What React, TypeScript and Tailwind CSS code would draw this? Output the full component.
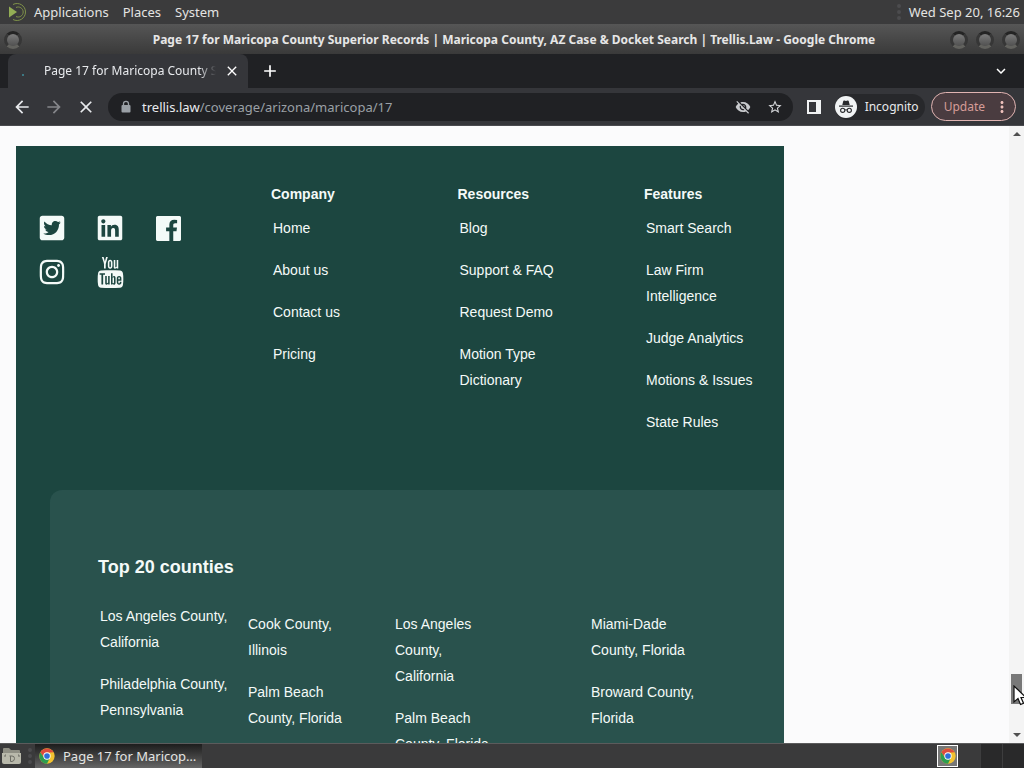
import React from 'react';
import { FaLinkedin, FaTwitterSquare, FaInstagram } from 'react-icons/fa';
import { TfiYoutube } from 'react-icons/tfi';
import {
  MdArrowBack,
  MdArrowForward,
  MdClose,
  MdAdd,
  MdVisibilityOff,
  MdStarBorder,
  MdMoreVert,
  MdExpandMore,
} from 'react-icons/md';

const companyLinks = ['Home', 'About us', 'Contact us', 'Pricing'];
const resourceLinks = ['Blog', 'Support & FAQ', 'Request Demo', 'Motion Type Dictionary'];
const featureLinks = [
  'Smart Search',
  'Law Firm Intelligence',
  'Judge Analytics',
  'Motions & Issues',
  'State Rules',
];

const ChromeLogo: React.FC<{ className?: string }> = ({ className }) => (
  <svg viewBox="0 0 48 48" className={className} aria-hidden="true">
    <circle cx="24" cy="24" r="23" fill="#f2c230" />
    <path d="M4 13A23 23 0 0 1 44 13L24 14A10 10 0 0 0 15.3 29Z" fill="#dd4b3e" />
    <path d="M4 13A23 23 0 0 0 24 47L32.7 29A10 10 0 0 1 15.3 29Z" fill="#2d9d50" />
    <circle cx="24" cy="24" r="11" fill="#fff" />
    <circle cx="24" cy="24" r="8.5" fill="#2f6fd8" />
  </svg>
);

const FacebookLogo: React.FC = () => (
  <svg viewBox="0 0 1536 1536" className="w-[25px] h-[25px]" fill="currentColor" aria-hidden="true">
    <path d="M1451 0q35 0 60 25t25 60v1366q0 35-25 60t-60 25h-391v-595h199l30-232h-229v-148q0-56 23.5-84t91.5-28l122-1v-207q-63-9-178-9-136 0-217.500 80t-81.500 226v171h-200v232h200v595h-735q-35 0-60-25t-25-60v-1366q0-35 25-60t60-25h1366z" />
  </svg>
);

const LockIcon: React.FC = () => (
  <svg viewBox="0 0 12 14" className="w-3 h-3.5" aria-hidden="true">
    <rect x="1.500" y="5" width="9" height="7.500" rx="1" fill="#9aa0a6" />
    <path d="M3.500 5.500V3.800A2.500 2.500 0 0 1 8.500 3.800V5.500" fill="none" stroke="#9aa0a6" strokeWidth="1.300" />
  </svg>
);

const IncognitoIcon: React.FC = () => (
  <svg viewBox="0 0 22 22" className="w-[22px] h-[22px]" aria-hidden="true">
    <circle cx="11" cy="11" r="11" fill="#f1f3f4" />
    <path d="M7.300 9 8.200 5.200Q8.500 4.300 9.400 4.600L11 5.100 12.600 4.600Q13.500 4.300 13.800 5.200L14.700 9Z" fill="#292a2d" />
    <rect x="4" y="9.500" width="14" height="1.200" fill="#292a2d" />
    <circle cx="7.700" cy="14.300" r="2.100" fill="none" stroke="#292a2d" strokeWidth="1.100" />
    <circle cx="14.300" cy="14.300" r="2.100" fill="none" stroke="#292a2d" strokeWidth="1.100" />
    <path d="M9.800 14.100Q11 13.300 12.200 14.100" fill="none" stroke="#292a2d" strokeWidth="1.100" />
  </svg>
);

const WindowButton: React.FC<{ label: string }> = ({ label }) => (
  <button
    aria-label={label}
    className="w-[18px] h-[18px] rounded-full border-[3px] border-t-[#242424] border-x-[#363636] border-b-[#62625e] bg-linear-to-b from-[#7c7c7c] to-[#505050]"
  />
);

const DesktopPanel: React.FC = () => (
  <div className="h-6 shrink-0 bg-[#3b3b3c] flex items-center justify-between pl-2 pr-1 text-[#e4e4e2]">
    <nav className="flex items-center">
      <svg viewBox="0 0 20 20" className="w-5 h-5 mr-1.5" aria-hidden="true">
        <path d="M1 4.500 9 10 1 15.500Z" fill="#93ad55" />
        <path d="M5 2.500A8.500 8.500 0 1 1 5 17.500" fill="none" stroke="#7f9249" strokeWidth="1" />
        <path d="M8 5.500A5 5 0 1 1 8 14.500" fill="none" stroke="#7f9249" strokeWidth="1" />
      </svg>
      <div className="flex gap-3.5">
        <button>Applications</button>
        <button>Places</button>
        <button>System</button>
      </div>
    </nav>
    <div className="flex items-center gap-2">
      <span className="w-1 h-4 border-l-4 border-dotted border-[#4c4c4e]" />
      <time>Wed Sep 20, 16:26</time>
    </div>
  </div>
);

const TitleBar: React.FC = () => (
  <header className="h-[30px] shrink-0 flex items-center bg-linear-to-b from-[#565656] to-[#3a3a3a] pl-1 pr-1 pt-0.5">
    <WindowButton label="Window menu" />
    <h1 className="flex-1 text-center text-xs leading-5 font-bold text-[#e6e6e6] truncate pl-14">
      Page 17 for Maricopa County Superior Records | Maricopa County, AZ Case &amp; Docket Search | Trellis.Law - Google Chrome
    </h1>
    <div className="flex gap-2">
      <WindowButton label="Minimize" />
      <WindowButton label="Maximize" />
      <WindowButton label="Close" />
    </div>
  </header>
);

const TabStrip: React.FC = () => (
  <div className="h-[34px] shrink-0 bg-[#202124] flex items-center pl-2 pr-3.5 text-white">
    <div className="w-60 h-full bg-[#35363a] rounded-t-lg flex items-center pl-3.5 pr-2">
      <span className="w-0.5 h-0.5 mt-2 mr-5 rounded-full bg-[#3f8f9c]" />
      <span className="flex-1 overflow-hidden whitespace-nowrap text-xs leading-5 text-[#e8eaed] mask-r-from-90%">
        Page 17 for Maricopa County S
      </span>
      <button aria-label="Close tab" className="ml-2">
        <MdClose className="w-4 h-4" />
      </button>
    </div>
    <button aria-label="New tab" className="ml-3">
      <MdAdd className="w-5 h-5" />
    </button>
    <button aria-label="Search tabs" className="ml-auto">
      <MdExpandMore className="w-[18px] h-[18px]" />
    </button>
  </div>
);

const Toolbar: React.FC = () => (
  <div className="h-[38px] shrink-0 bg-[#35363a] flex items-center pl-3 pr-2 border-b border-[#4a4b4f] text-xs leading-5 text-[#e8eaed]">
    <div className="flex gap-3">
      <button aria-label="Back"><MdArrowBack className="w-5 h-5" /></button>
      <button aria-label="Forward"><MdArrowForward className="w-5 h-5 text-[#85868a]" /></button>
      <button aria-label="Stop"><MdClose className="w-5 h-5" /></button>
    </div>
    <div className="flex-1 h-7 ml-3 rounded-full bg-[#202124] flex items-center pl-3 pr-2.5 text-[#9aa0a6]">
      <LockIcon />
      <a href="#address" className="flex-1 ml-2.5 text-[13px]">
        <span className="text-[#e8eaed]">trellis.law</span>/coverage/arizona/maricopa/17
      </a>
      <button aria-label="Third-party cookies blocked" className="mr-4">
        <MdVisibilityOff className="w-4 h-4 text-[#c8cacd]" />
      </button>
      <button aria-label="Bookmark this tab"><MdStarBorder className="w-4 h-4 text-[#d5d7da]" /></button>
    </div>
    <button aria-label="Side panel" className="ml-3.5 w-3.5 h-3.5 border-2 border-r-[5px] border-[#f1f3f4]" />
    <button className="ml-3.5 h-[26px] pr-1.5 rounded-full bg-[#27282b] flex items-center gap-2">
      <IncognitoIcon />
      Incognito
    </button>
    <button className="ml-1.5 h-[29px] pl-3 pr-1 rounded-full border border-[#e0b4b2] bg-[#4a3c40] text-[#d69c98] flex items-center gap-2">
      Update
      <MdMoreVert className="w-[18px] h-[18px] text-[#eec0bb]" />
    </button>
  </div>
);

const LinkList: React.FC<{ links: string[]; className?: string }> = ({ links, className }) => (
  <ul className={`space-y-4 ${className ?? ''}`}>
    {links.map((link) => (
      <li key={link}>
        <a href="#link">{link}</a>
      </li>
    ))}
  </ul>
);

const LinkColumn: React.FC<{ title: string; links: string[] }> = ({ title, links }) => (
  <div>
    <h2 className="font-bold">{title}</h2>
    <LinkList links={links} className="mt-2 ml-0.5 w-28" />
  </div>
);

const Footer: React.FC = () => (
  <footer className="w-[75vw] h-full bg-[#1c4640] text-[#f4faf8] text-sm leading-[26px]">
    <div className="grid grid-cols-[255px_1fr_1fr_140px] pt-[35px] pb-[55px]">
      <div className="grid grid-cols-[58px_58px_58px] auto-rows-[44px] place-items-center content-start pl-[7px] pt-[25px]">
        <a href="#twitter" aria-label="Twitter"><FaTwitterSquare className="block w-7 h-7" /></a>
        <a href="#linkedin" aria-label="LinkedIn"><FaLinkedin className="block w-7 h-7" /></a>
        <a href="#facebook" aria-label="Facebook"><FacebookLogo /></a>
        <a href="#instagram" aria-label="Instagram"><FaInstagram className="block w-7 h-7" /></a>
        <a href="#youtube" aria-label="YouTube"><TfiYoutube className="block w-[31px] h-[31px]" /></a>
      </div>
      <LinkColumn title="Company" links={companyLinks} />
      <LinkColumn title="Resources" links={resourceLinks} />
      <LinkColumn title="Features" links={featureLinks} />
    </div>
    <section className="ml-[34px] pl-12 pt-16 h-full rounded-tl-xl bg-[#29524d]">
      <h2 className="text-lg leading-[26px] font-bold">Top 20 counties</h2>
      <div className="grid grid-cols-[148px_147px_196px_1fr] pl-0.5 mt-[23px]">
        <LinkList links={['Los Angeles County, California', 'Philadelphia County, Pennsylvania']} className="w-32" />
        <LinkList links={['Cook County, Illinois', 'Palm Beach County, Florida']} className="mt-2 w-24" />
        <LinkList links={['Los Angeles County, California', 'Palm Beach County, Florida']} className="mt-2 w-24" />
        <LinkList links={['Miami-Dade County, Florida', 'Broward County, Florida']} className="mt-2 w-28" />
      </div>
    </section>
  </footer>
);

const ScrollBar: React.FC = () => (
  <div className="w-[15px] shrink-0 bg-[#f4f4f4] flex flex-col items-center pt-1.5 pb-1.5 text-[#505050]">
    <svg viewBox="0 0 8 4" className="w-2 h-1" fill="currentColor" aria-hidden="true"><path d="M0 4 4 0 8 4Z" /></svg>
    <div className="flex-1" />
    <div className="w-[11px] h-[30px] mb-[29px] bg-[#787878]" />
    <svg viewBox="0 0 8 4" className="w-2 h-1" fill="currentColor" aria-hidden="true"><path d="M0 0 4 4 8 0Z" /></svg>
  </div>
);

const Taskbar: React.FC = () => (
  <div className="h-[25px] shrink-0 border-t border-[#5b5b5c] bg-[#3a3a3b] flex items-center pl-0.5 text-[#e4e4e2]">
    <button aria-label="Files">
      <svg viewBox="0 0 20 18" className="w-5 h-[18px]" aria-hidden="true">
        <path d="M1 2Q1 1 2 1H7L9 3H17Q18 3 18 4V7H1Z" fill="#8f8f84" />
        <path d="M0 6H19V15Q19 17 17 17H2Q0 17 0 15Z" fill="#b9b9ab" />
        <path d="M7.500 9H10Q12.500 9 12.500 11.500T10 14.500H8.500V9M4 8H3V10M16 8H17V10" fill="none" stroke="#6d6d64" />
      </svg>
    </button>
    <span className="ml-1.5 w-1 h-4 border-l-4 border-dotted border-[#4c4c4e]" />
    <button className="ml-[3px] w-[167px] h-6 px-1 flex items-center gap-2 bg-linear-to-b from-[#1d1d1d] to-[#666] text-left">
      <ChromeLogo className="w-4 h-4 shrink-0" />
      <span className="truncate">Page 17 for Maricop…</span>
    </button>
    <div className="ml-auto h-full flex items-center">
      <div className="w-[21px] h-[22px] border border-white bg-[#777] flex items-center justify-center">
        <ChromeLogo className="w-4 h-4" />
      </div>
      <div className="ml-[22px] w-[22px] h-full border-l border-[#3d3d3e] bg-[#29292a]" />
      <div className="w-[22px] h-full border-l border-[#3d3d3e] bg-[#29292a]" />
    </div>
  </div>
);

const App: React.FC = () => {
  return (
    <div className="relative h-screen flex flex-col overflow-hidden text-[13px] leading-5 font-['Noto_Sans',sans-serif]">
      <DesktopPanel />
      <TitleBar />
      <TabStrip />
      <Toolbar />
      <div className="flex-1 min-h-0 flex bg-[#fbfbfc]">
        <main className="flex-1 overflow-hidden pl-4 pt-5 font-['Liberation_Sans',Arial,sans-serif]">
          <Footer />
        </main>
        <ScrollBar />
      </div>
      <Taskbar />
      <svg viewBox="0 0 14 21" className="absolute right-[-3px] bottom-[62px] w-[14px] h-[21px]" aria-hidden="true">
        <path d="M1 1V17L5 13.500 7.500 19.500 10.500 18.200 8 12.500H13Z" fill="#fff" stroke="#111" strokeWidth="1.200" />
      </svg>
    </div>
  );
};

export default App;
